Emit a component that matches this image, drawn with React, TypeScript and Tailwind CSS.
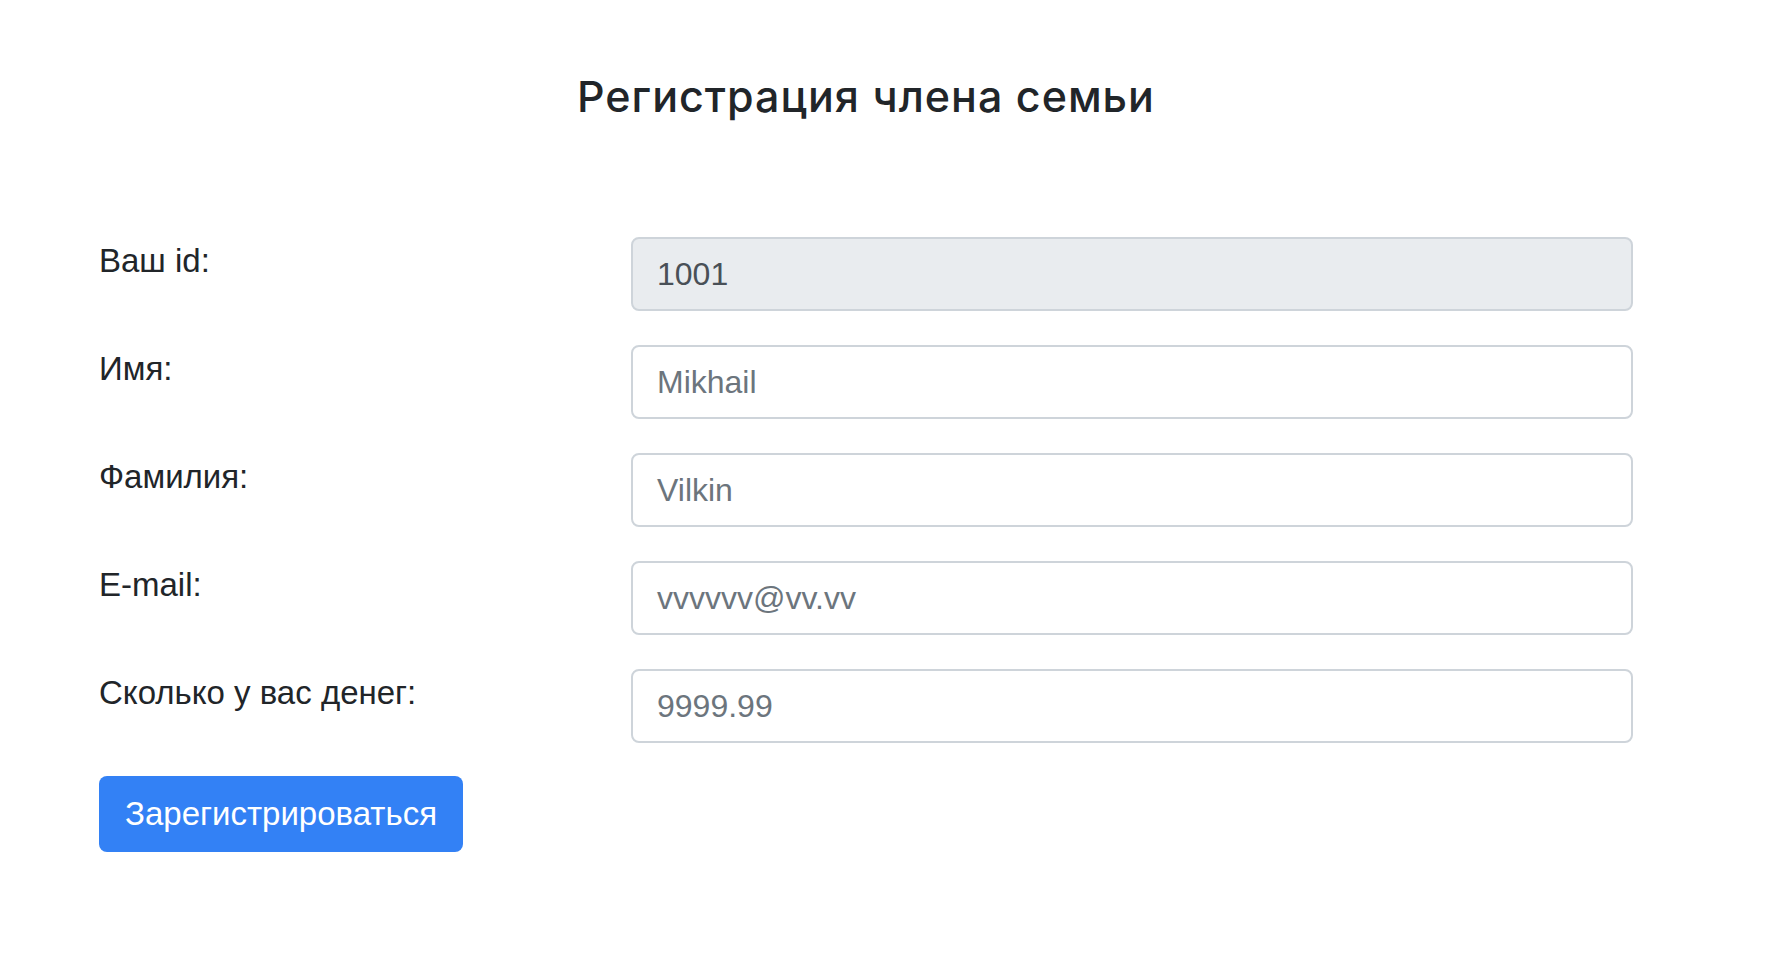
import React from "react";

const rows = [
  { label: "Ваш id:", value: "1001", disabled: true },
  { label: "Имя:", value: "Mikhail" },
  { label: "Фамилия:", value: "Vilkin" },
  { label: "E-mail:", value: "vvvvvv@vv.vv" },
  { label: "Сколько у вас денег:", value: "9999.99" },
];

export default function App() {
  return (
    <div
      className="min-h-screen w-full bg-white text-[#212529]"
      style={{ fontFamily: '"Liberation Sans", Arial, sans-serif' }}
    >
      <div className="w-[1534px] ml-[99px] pt-[71px]">
        <h1
          className="text-center text-[43px] leading-[50px] font-medium tracking-[1px] text-[#212529]"
          style={{ fontFamily: 'Inter, "Noto Sans", sans-serif' }}
        >
          Регистрация члена семьи
        </h1>
        <form className="mt-[116px] flex flex-col">
          {rows.map((r) => (
            <div key={r.label} className="flex items-start mb-[34px]">
              <label className="w-[532px] shrink-0 text-[33px] leading-[48px] text-[#212529]">
                {r.label}
              </label>
              <div
                className={
                  "w-[1002px] h-[74px] rounded-[8px] border-2 border-[#ced4da] flex items-center pl-[24px] text-[32px] " +
                  (r.disabled
                    ? "bg-[#e9ecef] text-[#495057]"
                    : "bg-white text-[#6c757d]")
                }
              >
                {r.value}
              </div>
            </div>
          ))}
          <div className="-mt-[1px]">
            <button
              type="button"
              className="h-[76px] px-[26px] rounded-[8px] bg-[#3381f5] text-white text-[33px] leading-[48px]"
            >
              Зарегистрироваться
            </button>
          </div>
        </form>
      </div>
    </div>
  );
}
